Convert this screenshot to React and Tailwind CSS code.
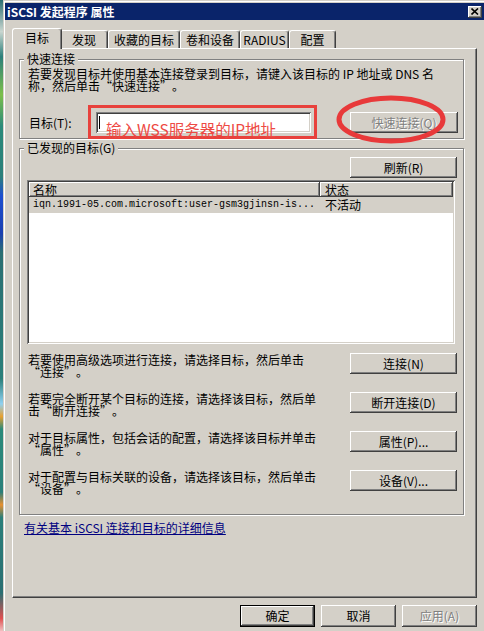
import React from 'react';

// classic Win32 3D edges
const RAISED = 'shadow-[inset_-1px_-1px_0_#404040,inset_1px_1px_0_#ffffff,inset_-2px_-2px_0_#808080]';
const SUNKEN = 'shadow-[inset_1px_1px_0_#808080,inset_-1px_-1px_0_#ffffff,inset_2px_2px_0_#404040,inset_-2px_-2px_0_#d4d0c8]';
const ETCHED = 'border border-[#808080] shadow-[inset_1px_1px_0_#ffffff,1px_1px_0_#ffffff]';

const TABS = [
  { label: '目标', w: 'w-[50px]', active: true },
  { label: '发现', w: 'w-[48px]' },
  { label: '收藏的目标', w: 'w-[72px]' },
  { label: '卷和设备', w: 'w-[60px]' },
  { label: 'RADIUS', w: 'w-[49px]' },
  { label: '配置', w: 'w-[47px]' },
];

const ACTIONS = [
  { text: ['若要使用高级选项进行连接，请选择目标，然后单击', '“连接”。'], btn: '连接(N)' },
  { text: ['若要完全断开某个目标的连接，请选择该目标，然后单', '击“断开连接”。'], btn: '断开连接(D)' },
  { text: ['对于目标属性，包括会话的配置，请选择该目标并单击', '“属性”。'], btn: '属性(P)...' },
  { text: ['对于配置与目标关联的设备，请选择该目标，然后单击', '“设备”。'], btn: '设备(V)...' },
];

// SimSun draws the curly quotes full width; give them a 12px cell
function Quoted({ s }) {
  return s.split(/([“”])/).map((p, i) => {
    if (p === '“') return <span key={i} className="inline-block w-[12px] text-right">“</span>;
    if (p === '”') return <span key={i} className="inline-block w-[12px] text-left">”</span>;
    return p;
  });
}

function Btn({ label, className = '', disabled = false, primary = false }) {
  return (
    <div
      className={`flex shrink-0 items-center justify-center bg-[#d4d0c8] ${RAISED} ${primary ? 'border border-black' : ''} ${disabled ? 'text-[#808080] [text-shadow:1px_1px_0_#ffffff]' : 'text-black'} ${className}`}
    >
      {label}
    </div>
  );
}

function Group({ title, className = '', children }) {
  return (
    <div className={`relative ${ETCHED} ${className}`}>
      <span className="absolute -top-[7px] left-[4px] bg-[#d4d0c8] px-[3px] leading-[12px]">{title}</span>
      {children}
    </div>
  );
}

export default function App() {
  return (
    <div
      lang="zh-CN"
      className="relative flex h-[631px] w-[484px] overflow-hidden bg-[#d4d0c8] font-['Noto_Sans_CJK_SC','Noto_Sans',sans-serif] text-[12px] leading-[12px] text-black"
    >
      {/* desktop peeking out on the left */}
      <div className="w-[3px] shrink-0 bg-[linear-gradient(to_bottom,#2b6f72_0%,#c9d6d0_5%,#2b7f7a_9%,#7cbf4a_15%,#2b8a7a_20%,#2b7f7a_28%,#1d4fd0_31%,#1a3fb0_37%,#2b6f72_40%,#2b7f7a_60%,#8fd0f0_64%,#e8a030_66%,#2b8a7a_68%,#2b7f7a_78%,#e89030_80%,#2b7f7a_82%,#2b6f72_94%,#e05050_98%,#f0c0c0_100%)]" />

      {/* window */}
      <div className="flex flex-1 flex-col pl-[2px] pt-[3px] shadow-[inset_1px_1px_0_#d4d0c8,inset_2px_2px_0_#ffffff]">
        {/* title bar */}
        <div className="flex h-[17px] items-center justify-between bg-[#0a246a] pl-[2px] pr-[2px]">
          <span className="font-bold text-white">iSCSI 发起程序 属性</span>
          <div className={`flex h-[12px] w-[14px] items-center justify-center bg-[#d4d0c8] ${RAISED}`}>
            <svg width="8" height="7" viewBox="0 0 8 7">
              <path d="M0.5 0.5 L7 6.5 M7 0.5 L0.5 6.5" stroke="#000" strokeWidth="1.6" />
            </svg>
          </div>
        </div>

        <div className="flex flex-1 flex-col px-[7px]">
          {/* tabs */}
          <div className="mt-[8px] flex h-[20px] items-end">
            {TABS.map((t) => (
              <div
                key={t.label}
                className={`flex shrink-0 items-center justify-center rounded-t-[3px] border-l border-r border-t border-l-white border-r-[#404040] border-t-white bg-[#d4d0c8] shadow-[inset_-1px_0_0_#808080] ${t.w} ${t.active ? 'relative z-10 -mb-px -mr-[2px] h-[21px] pb-[2px]' : 'h-[18px]'}`}
              >
                {t.label}
              </div>
            ))}
          </div>

          {/* tab page */}
          <div className="flex h-[550px] flex-col border-b border-l border-r border-t border-b-[#404040] border-l-white border-r-[#404040] border-t-white shadow-[inset_-1px_-1px_0_#808080]">
            {/* quick connect */}
            <Group title="快速连接" className="ml-[6px] mt-[10px] h-[80px] w-[445px] pl-[7px] pr-[5px] pt-[8px]">
              <p className="ml-[1px]">
                若要发现目标并使用基本连接登录到目标，请键入该目标的 IP 地址或 DNS 名
                <br />
                <Quoted s="称，然后单击“快速连接”。" />
              </p>
              <div className="mt-[20px] flex h-[21px] items-center">
                <span className="ml-[2px] w-[67px]">目标(T):</span>
                <div className={`flex h-[21px] w-[215px] items-center bg-white pl-[3px] ${SUNKEN}`}>
                  <div className="h-[13px] w-px bg-black" />
                </div>
                <Btn label="快速连接(Q)" disabled className="ml-auto h-[21px] w-[108px]" />
              </div>
            </Group>

            {/* discovered targets */}
            <Group title="已发现的目标(G)" className="ml-[6px] mt-[9px] h-[367px] w-[445px] pl-[7px] pr-[6px] pt-[8px]">
              <div className="flex justify-end">
                <Btn label="刷新(R)" className="h-[21px] w-[107px]" />
              </div>
              <div className={`mt-[2px] h-[164px] w-[428px] bg-white p-[2px] ${SUNKEN}`}>
                <div className="flex h-[15px]">
                  <div className={`flex w-[291px] items-center bg-[#d4d0c8] pl-[4px] ${RAISED}`}>名称</div>
                  <div className={`flex flex-1 items-center bg-[#d4d0c8] pl-[5px] ${RAISED}`}>状态</div>
                </div>
                <div className="flex h-[16px] items-center bg-[#d4d0c8]">
                  <div className="w-[291px] pl-[4px] font-['Liberation_Mono',monospace] text-[10px]">
                    iqn.1991-05.com.microsoft:user-gsm3gjinsn-is...
                  </div>
                  <div className="pl-[5px]">不活动</div>
                </div>
              </div>

              <div className="mt-[9px] flex flex-col gap-[14px]">
                {ACTIONS.map((a) => (
                  <div key={a.btn} className="flex items-start justify-between">
                    <p className="ml-[1px] pt-[1px]">
                      <Quoted s={a.text[0]} />
                      <br />
                      <Quoted s={a.text[1]} />
                    </p>
                    <Btn label={a.btn} className="h-[21px] w-[107px]" />
                  </div>
                ))}
              </div>
            </Group>

            <a className="ml-[11px] mt-[7px] self-start text-[#000080] underline">
              有关基本 iSCSI 连接和目标的详细信息
            </a>
          </div>

          {/* dialog buttons */}
          <div className="mt-[7px] flex justify-end gap-[6px]">
            <Btn label="确定" primary className="h-[22px] w-[75px]" />
            <Btn label="取消" className="h-[22px] w-[75px]" />
            <Btn label="应用(A)" disabled className="h-[22px] w-[75px]" />
          </div>
        </div>
      </div>

      {/* red annotations drawn on top of the screenshot */}
      <div className="absolute left-[88px] top-[105px] h-[34px] w-[229px] border-[3px] border-[#e8413c]" />
      <span className="absolute left-[106px] top-[121px] text-[15.5px] leading-[17px] text-[#ee4a44]">
        输入WSS服务器的IP地址
      </span>
      <svg className="absolute left-[335px] top-[94px]" width="112" height="51" viewBox="0 0 112 51">
        <ellipse cx="56" cy="25.5" rx="52" ry="21.5" fill="none" stroke="#e8393a" strokeWidth="5" />
      </svg>
    </div>
  );
}
